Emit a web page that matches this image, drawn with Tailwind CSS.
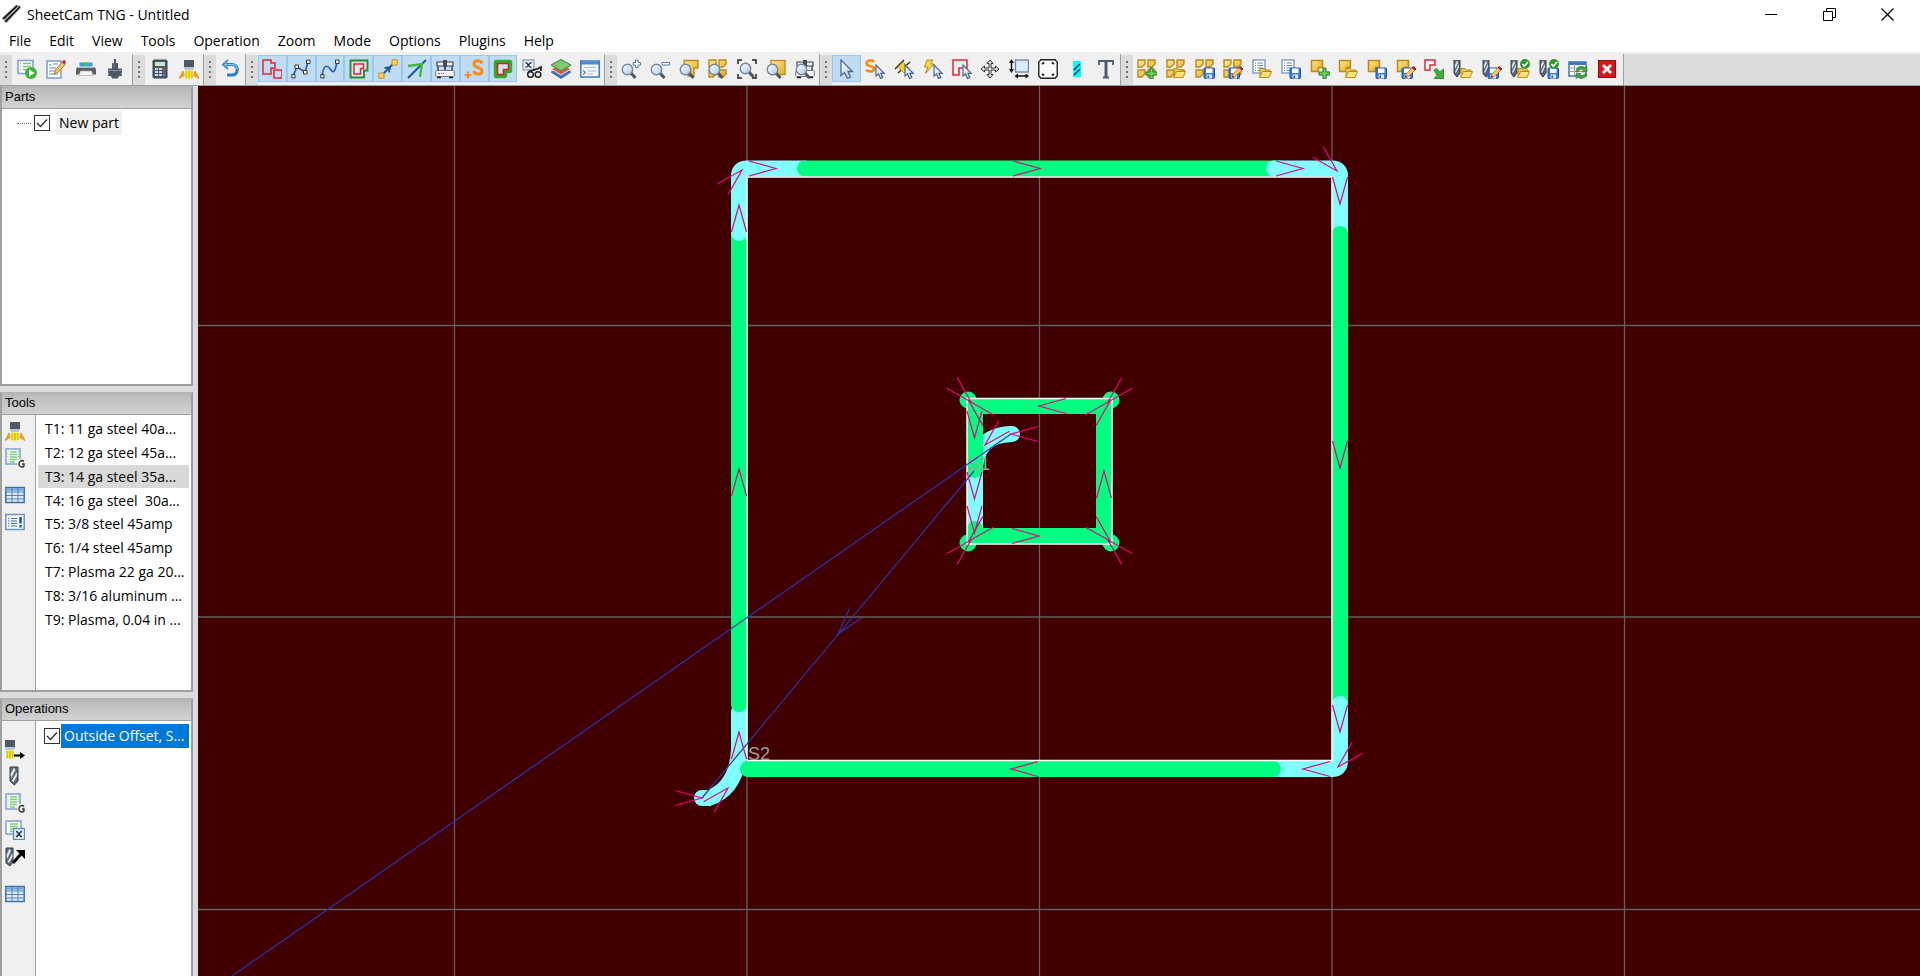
<!DOCTYPE html>
<html lang="en">
  <head>
    <meta charset="UTF-8" />
    <meta name="viewport" content="width=device-width, initial-scale=1.0" />
    <title>SheetCam TNG - Untitled</title>
    <script src="https://cdn.jsdelivr.net/npm/@tailwindcss/browser@4"></script>
  </head>
  <body
    class="h-screen flex flex-col overflow-hidden bg-white text-black text-[14px] font-['Open_Sans','Noto_Sans',sans-serif]"
  >
    <!-- icon parts and icons; not display:none, or the gradients are lost -->
    <svg class="absolute size-0" xmlns="http://www.w3.org/2000/svg">
      <defs>
        <linearGradient id="gold" x1="0" y1="0" x2="1" y2="1">
          <stop offset="0" stop-color="#ffe98a" />
          <stop offset="1" stop-color="#e2ac1f" />
        </linearGradient>
        <linearGradient id="glass" x1="0" y1="0" x2="1" y2="1">
          <stop offset="0" stop-color="#ffffff" />
          <stop offset="1" stop-color="#a9c9ea" />
        </linearGradient>
      </defs>

      <symbol id="part" viewBox="0 0 20 20">
        <path d="M1.500 1.500H12.500V8.500H8.500V12.500H1.500Z" fill="url(#gold)" stroke="#b98a1c" stroke-width="1.500" />
      </symbol>
      <symbol id="nest" viewBox="0 0 20 20">
        <path
          d="M1 1H8V5L5 8H1ZM11 1H18V5L15 8H11ZM1 11H8V15L5 18H1ZM11 11H18V15L15 18H11Z"
          fill="url(#gold)"
          stroke="#b98a1c"
          stroke-width="1.400"
        />
      </symbol>
      <symbol id="folder" viewBox="0 0 20 20">
        <path d="M8 18V9.500H12L13 11H18V13" fill="#f3c84c" stroke="#b98a1c" />
        <path d="M7.500 18.500L10.500 12.500H19.500L17 18.500Z" fill="#ffe277" stroke="#b98a1c" />
      </symbol>
      <symbol id="disk" viewBox="0 0 20 20">
        <rect x="9" y="9" width="10.500" height="10.500" rx="1" fill="#3b7be0" stroke="#1d55b3" />
        <rect x="11" y="9.500" width="6.500" height="4.500" fill="#fff" />
        <rect x="11.500" y="15.500" width="5.500" height="4" fill="#e6f0fb" />
        <rect x="12.500" y="16.500" width="1.500" height="2.500" fill="#1d55b3" />
      </symbol>
      <symbol id="pencil" viewBox="0 0 20 20">
        <path d="M9 18.500L10 15L16 8.500L19 11L12.500 17.500Z" fill="#f4c46c" stroke="#b0752a" stroke-width=".8" />
        <path d="M16 8.500L17.500 7.500L20 10L19 11Z" fill="#c92a2a" stroke="#a01818" />
        <path d="M9 18.500L9.600 16.400L11 17.800Z" fill="#333" />
      </symbol>
      <symbol id="plus" viewBox="0 0 20 20">
        <path d="M13 9H16V13H20V16H16V20H13V16H9V13H13Z" fill="#6fd05a" stroke="#24791f" />
      </symbol>
      <symbol id="drill" viewBox="0 0 20 20">
        <path d="M1 1H7V14L4 18L1 15Z" fill="#5a6877" />
        <path d="M1.500 7L4 1.500L5 4L2 10ZM2 13L6 5V8L3 14Z" fill="#dfe6ec" />
        <path d="M1 1V14L4 18L7 14V1" fill="none" stroke="#323d49" />
      </symbol>
      <symbol id="ok" viewBox="0 0 20 20">
        <circle cx="15" cy="5" r="5" fill="#2f9a2b" />
        <path d="M12.300 5L14.300 7L18 3" fill="none" stroke="#fff" stroke-width="1.600" />
      </symbol>
      <symbol id="page" viewBox="0 0 20 20">
        <rect x="1" y="1" width="12" height="13" fill="#fff" stroke="#7c9cc4" stroke-width="1.400" />
        <path d="M3 4H4M5.500 4H11M3 6.500H4M5.500 6.500H11M3 9H4M5.500 9H11M3 11.500H4M5.500 11.500H11" stroke="#5b84b8" />
      </symbol>
      <symbol id="lens" viewBox="0 0 20 20">
        <path d="M10 14L14.500 19" stroke="#4d565f" stroke-width="3" />
        <circle cx="6.500" cy="10.500" r="5.200" fill="url(#glass)" stroke="#75869b" stroke-width="1.400" />
      </symbol>
      <symbol id="pointer" viewBox="0 0 20 20">
        <path
          d="M11 6V17L13.500 15L15.500 19.500L17.800 18.500L16 14.300H19.300Z"
          fill="url(#glass)"
          stroke="#50698a"
          stroke-width="1.200"
        />
      </symbol>
      <symbol id="torchhead" viewBox="0 0 20 20">
        <path d="M5 1H15V8L13 11H7L5 8Z" fill="#4d5967" />
        <path d="M5 8H15L13 11H7Z" fill="#b9c6d3" />
        <rect x="7" y="11.500" width="6" height="8" fill="#ffee00" />
        <path d="M7 12V19M10 12V19M13 12V19" stroke="#a79500" stroke-width=".8" />
      </symbol>
      <symbol id="gantry" viewBox="0 0 20 20">
        <path d="M2 3H18V7H2Z" fill="#eef0f2" stroke="#3c444c" stroke-width="1.200" />
        <path d="M3 7V11M17 7V11" stroke="#3c444c" stroke-width="1.500" />
        <rect x="8" y="1" width="4" height="7" fill="#444c55" />
        <path d="M10 8V11" stroke="#222" stroke-width="1.500" />
        <rect x=".7" y="11.500" width="18.600" height="6" rx="1" fill="#f4f5f6" stroke="#737b83" />
        <path d="M3 14.500H5M6 14.500H7" stroke="#d33" />
        <path d="M8 14.500H9" stroke="#3a3" />
        <path d="M2 18.500H6M14 18.500H18" stroke="#222" stroke-width="1.500" />
      </symbol>

      <symbol id="i-run" viewBox="0 0 20 20">
        <rect x="1" y="1.500" width="15" height="13" fill="#fff" stroke="#7ea3cc" stroke-width="1.600" />
        <path d="M3 4.500H4M6 4.500H14M3 7.500H4M6 7.500H14M3 10.500H4M6 10.500H14" stroke="#6fc96a" stroke-width="1.500" />
        <circle cx="14" cy="14" r="6" fill="#3fb637" />
        <path d="M12 10.500L17.500 14L12 17.500Z" fill="#fff" />
      </symbol>
      <symbol id="i-edit" viewBox="0 0 20 20">
        <rect x="1" y="2" width="14" height="17" fill="#fff" stroke="#7ea3cc" stroke-width="1.600" />
        <path d="M3 6H6M7 5H12M3 9H10M3 12H9M3 15H12" stroke="#5d8cc2" stroke-width="1.200" />
        <path d="M8 15L9.500 11L16 3L19 5.500L12 13.500Z" fill="#f4c46c" stroke="#b0752a" />
        <path d="M16 3L18 .8L20 2.500L19 5.500Z" fill="#c92a2a" />
      </symbol>
      <symbol id="i-print" viewBox="0 0 20 20">
        <rect x="3.500" y="3.500" width="13" height="4" fill="#37a1dd" />
        <path d="M8 3.500H13V6H8Z" fill="#53c04a" />
        <path d="M1 8H19L20 11V15.500H16V12H4V15.500H0V11Z" fill="#5a5f65" />
        <path d="M1.500 8.500H18.500" stroke="#b9bec3" />
        <path d="M4.500 12H15.500L17 16.500H3Z" fill="#f7f7f7" stroke="#aaa" stroke-width=".7" />
      </symbol>
      <symbol id="i-mill" viewBox="0 0 20 20">
        <path d="M9 0H11V4H13V9.500H17V14.500H16V15.500H17V17H14L13 19.500H7L6 17H3V15.500H4V14.500H3V9.500H7V4H9Z" fill="#4b5866" />
        <path d="M3 11.500H17" stroke="#8494a5" />
        <path d="M9 4V9" stroke="#7d8b99" />
      </symbol>
      <symbol id="i-calc" viewBox="0 0 20 20">
        <rect x="3" y="1" width="14" height="18" rx="1" fill="#4a5866" stroke="#35414d" />
        <rect x="5" y="3" width="10" height="4" fill="#cfe5c6" />
        <path d="M5 10H8M9 10H12M5 13H8M9 13H12M5 16H8M9 16H12" stroke="#c7d6e6" stroke-width="2" />
        <path d="M13 10H15M13 13H15" stroke="#e04040" stroke-width="2" />
        <path d="M13 16H15" stroke="#4d94e8" stroke-width="2" />
      </symbol>
      <symbol id="i-plasma" viewBox="0 0 20 20">
        <use href="#torchhead" />
        <path d="M4 12L5.300 16.500L0 19.500ZM16 12L14.700 16.500L20 19.500Z" fill="#f2a71b" stroke="#d98d10" stroke-width=".8" />
      </symbol>
      <symbol id="i-undo" viewBox="0 0 20 20">
        <path d="M5 5.500H11C18 5.500 18 16 11 16H6" fill="none" stroke="#2a7fd0" stroke-width="3.200" />
        <path d="M4 5.500H11C15 5.500 16 8 16 10" fill="none" stroke="#8cc6f2" stroke-width="1.200" />
        <path d="M7 1L2 5.500L7 10" fill="none" stroke="#3d92de" stroke-width="2" />
      </symbol>
      <symbol id="i-outline" viewBox="0 0 20 20">
        <path d="M1 1H9V4H13V9H9V15H1ZM12 11H20V19H12Z" fill="none" stroke="#e62331" stroke-width="1.500" />
      </symbol>
      <symbol id="i-nodes" viewBox="0 0 20 20">
        <path d="M2 17L6 8L14 13L17 3" fill="none" stroke="#2b5fa8" stroke-width="1.700" />
        <path d="M.8 15.500H4V19H.8ZM4 6H7.500V9.500H4ZM12.500 11.500H16V15H12.500ZM15.500 1H19V4.500H15.500Z" fill="#fff" stroke="#333" />
      </symbol>
      <symbol id="i-curve" viewBox="0 0 20 20">
        <path d="M2 17C4 2 9 8 11 11C14 16 16 9 17 3" fill="none" stroke="#2b5fa8" stroke-width="1.700" />
        <path d="M.8 15.500H4V19H.8ZM15.500 1H19V4.500H15.500Z" fill="#fff" stroke="#333" />
      </symbol>
      <symbol id="i-offset" viewBox="0 0 20 20">
        <path d="M1.500 1.500H18.500V11.500H15V18.500H1.500Z" fill="#d3e6f2" stroke="#2a8a2d" stroke-width="1.900" />
        <path d="M5 5H14.500V9.500H11.500V15H5Z" fill="#e6eef5" stroke="#e62331" stroke-width="1.500" />
      </symbol>
      <symbol id="i-rapid" viewBox="0 0 20 20">
        <path d="M4 16L16 4M6.500 9L12 8L11 13.500" fill="none" stroke="#1f55a5" stroke-width="1.800" />
        <path d="M.8 14H6V19.200H.8ZM14 .8H19.200V6H14Z" fill="#ffd55a" stroke="#c28f1b" />
      </symbol>
      <symbol id="i-direction" viewBox="0 0 20 20">
        <path d="M1 19L19 1" stroke="#1f55a5" stroke-width="2" />
        <path d="M1 7L15 5L13 18" fill="none" stroke="#3fbb2f" stroke-width="2.300" />
      </symbol>
      <symbol id="i-machine" viewBox="0 0 20 20"><use href="#gantry" /></symbol>
      <symbol id="i-start" viewBox="0 0 20 20">
        <path
          d="M18 4.500C16.500 .8 10 .8 10 5C10 9.500 18 7.500 18 12C18 16 11 16 9.500 12"
          fill="none"
          stroke="#fb8c14"
          stroke-width="3"
        />
        <path d="M4 12.500V19.500M.5 16H7.500" stroke="#fb8c14" stroke-width="2.200" />
      </symbol>
      <symbol id="i-path" viewBox="0 0 20 20">
        <path d="M3.500 3.500H16.500V11.500H11.500V16.500H3.500Z" fill="#d3e3f0" stroke="#2fae28" stroke-width="5.500" stroke-linejoin="round" />
        <path d="M4.500 4.500H15.500V10.500H10.500V15.500H4.500Z" fill="#d3e3f0" stroke="#d51f2b" stroke-width="1.600" />
      </symbol>
      <symbol id="i-vars" viewBox="0 0 20 20">
        <rect x="1" y="1" width="11" height="10" fill="#e9f3fd" stroke="#7ea3cc" stroke-width="1.300" />
        <path d="M3.500 3.500C6 3.500 6.500 8.500 9.500 8.500M9.500 3.500C7 3.500 6 8.500 3.500 8.500" fill="none" stroke="#222" stroke-width="1.300" />
        <path d="M6 14C8 10 11 13 19 8V12" fill="none" stroke="#222" stroke-width="1.700" />
        <circle cx="8.500" cy="15.500" r="2.800" fill="#eee" stroke="#222" stroke-width="1.500" />
        <circle cx="16" cy="15.500" r="2.800" fill="#eee" stroke="#222" stroke-width="1.500" />
      </symbol>
      <symbol id="i-layers" viewBox="0 0 20 20">
        <path d="M0 13L10 8L20 13L10 19.500Z" fill="#3b74c4" stroke="#28599e" stroke-width=".7" />
        <path d="M0 10L10 5L20 10L10 16Z" fill="#e25b50" stroke="#fff" stroke-width=".8" />
        <path d="M0 6L10 .5L20 6L10 12Z" fill="#7dc974" stroke="#2c8a2a" />
      </symbol>
      <symbol id="i-console" viewBox="0 0 20 20">
        <rect x=".8" y="2" width="18.400" height="16" fill="#f1f8ff" stroke="#3c78be" stroke-width="1.500" />
        <path d="M1 4H19" stroke="#4c8bd1" stroke-width="3" />
        <path d="M3 11.500L5.500 13.500L3 15.500" fill="none" stroke="#345" />
        <path d="M4 8.500H16M7.500 12H16M7.500 15H13" stroke="#9ebcdb" stroke-width="1.200" />
      </symbol>

      <symbol id="i-zoomin" viewBox="0 0 20 20">
        <use href="#lens" />
        <path d="M14.500 1H17V3.500H19.500V6H17V8.500H14.500V6H12V3.500H14.500Z" fill="#fff" stroke="#4d7dae" />
      </symbol>
      <symbol id="i-zoomout" viewBox="0 0 20 20">
        <use href="#lens" />
        <path d="M12 3.500H19.500V6H12Z" fill="#fff" stroke="#4d7dae" />
      </symbol>
      <symbol id="i-zoompart" viewBox="0 0 20 20">
        <path d="M5 1.500H19V9H15V17H9V9H5Z" fill="url(#gold)" stroke="#b98a1c" stroke-width="1.300" />
        <use href="#lens" />
      </symbol>
      <symbol id="i-zoomnest" viewBox="0 0 20 20">
        <use href="#nest" />
        <use href="#lens" />
      </symbol>
      <symbol id="i-zoomfit" viewBox="0 0 20 20">
        <use href="#lens" x="2" y="-1" />
        <path d="M1 5V1H5M15 1H19V5M1 15V19H5M15 19H19V15" fill="none" stroke="#222" stroke-width="1.500" />
      </symbol>
      <symbol id="i-zoomsheet" viewBox="0 0 20 20">
        <rect x="5" y="1.500" width="14" height="14" fill="url(#gold)" stroke="#b98a1c" stroke-width="1.300" />
        <use href="#lens" />
      </symbol>
      <symbol id="i-zoommachine" viewBox="0 0 20 20">
        <use href="#gantry" />
        <use href="#lens" />
      </symbol>

      <symbol id="i-select" viewBox="0 0 20 20">
        <path
          d="M5 1V16.500L8.500 13.500L11.500 19.500L14.500 18L12 12.500H16.500Z"
          fill="url(#glass)"
          stroke="#50698a"
          stroke-width="1.300"
        />
      </symbol>
      <symbol id="i-selstart" viewBox="0 0 20 20">
        <path
          d="M9 3C7.500 .5 1.500 1 1.500 4.500C1.500 8 9.300 6.500 9.300 9.800C9.300 13 3 13 1 10.500"
          fill="none"
          stroke="#fb8c14"
          stroke-width="2.700"
        />
        <use href="#pointer" />
      </symbol>
      <symbol id="i-seltab" viewBox="0 0 20 20">
        <path d="M1 10L10 1M4 14L16 3" stroke="#333" stroke-width="1.500" />
        <path d="M4 8L9 3L15 9L10 14Z" fill="#f8cf2f" stroke="#c59a13" />
        <use href="#pointer" />
      </symbol>
      <symbol id="i-selrapid" viewBox="0 0 20 20">
        <path d="M4 1H10L7.500 5H11L2.500 14.500L5 8H1.500Z" fill="#ffd84a" stroke="#b98a1c" />
        <use href="#pointer" />
      </symbol>
      <symbol id="i-selcontour" viewBox="0 0 20 20">
        <path d="M1 1H15V9H7V16H1Z" fill="none" stroke="#e62331" stroke-width="1.500" />
        <use href="#pointer" />
      </symbol>
      <symbol id="i-move" viewBox="0 0 20 20">
        <path
          d="M10 1L13 4.500H11V9H15.500V7L19 10L15.500 13V11H11V15.500H13L10 19L7 15.500H9V11H4.500V13L1 10L4.500 7V9H9V4.500H7Z"
          fill="#e7e7e7"
          stroke="#333"
        />
      </symbol>
      <symbol id="i-size" viewBox="0 0 20 20">
        <rect x="6.500" y="1" width="13" height="12" fill="#dcebfb" stroke="#6284ad" stroke-width="1.300" />
        <path d="M2.500 2V12M7 17H18" stroke="#111" stroke-width="1.500" />
        <path d="M2.500 0L5 4H0ZM2.500 14L5 10H0ZM5.500 17L9 14.500V19.500ZM20 17L16.500 14.500V19.500Z" fill="#111" />
      </symbol>
      <symbol id="i-plate" viewBox="0 0 20 20">
        <path
          d="M3 .8H17L19.200 3V17L17 19.200H3L.8 17V3Z"
          fill="#fbfbfb"
          stroke="#222"
          stroke-width="1.400"
        />
        <path d="M4 5L6 3.500M14 3.500L16 5M4 15L6 16.500M14 16.500L16 15" stroke="#222" stroke-width="2" />
      </symbol>
      <symbol id="i-hatch" viewBox="0 0 20 20">
        <rect x="6" y="2" width="8" height="16" fill="#00ffff" />
        <path d="M7 11L13 5M7 16L13 10" stroke="#124" stroke-width="1.300" />
      </symbol>
      <symbol id="i-text" viewBox="0 0 20 20">
        <path d="M3 6V2H17V6M7 18.500H13" fill="none" stroke="#4e5d6d" stroke-width="1.800" />
        <path d="M10 2V18" stroke="#4e5d6d" stroke-width="3" />
      </symbol>

      <symbol id="i-nestnew" viewBox="0 0 20 20"><use href="#nest" /><use href="#plus" /></symbol>
      <symbol id="i-nestopen" viewBox="0 0 20 20"><use href="#nest" /><use href="#folder" /></symbol>
      <symbol id="i-nestsave" viewBox="0 0 20 20"><use href="#nest" /><use href="#disk" /></symbol>
      <symbol id="i-nestsaveas" viewBox="0 0 20 20">
        <use href="#nest" /><use href="#disk" x="-3" /><use href="#pencil" />
      </symbol>
      <symbol id="i-jobopen" viewBox="0 0 20 20"><use href="#page" /><use href="#folder" /></symbol>
      <symbol id="i-jobsave" viewBox="0 0 20 20"><use href="#page" /><use href="#disk" /></symbol>
      <symbol id="i-partnew" viewBox="0 0 20 20"><use href="#part" /><use href="#plus" /></symbol>
      <symbol id="i-partopen" viewBox="0 0 20 20"><use href="#part" /><use href="#folder" /></symbol>
      <symbol id="i-partsave" viewBox="0 0 20 20"><use href="#part" /><use href="#disk" /></symbol>
      <symbol id="i-partsaveas" viewBox="0 0 20 20">
        <use href="#part" /><use href="#disk" x="-3" /><use href="#pencil" />
      </symbol>
      <symbol id="i-import" viewBox="0 0 20 20">
        <path d="M1 1H11V6H6V11H1Z" fill="#fff" stroke="#e62331" stroke-width="1.500" />
        <path d="M10 11L12.500 9.500L16 13L19.500 10V19.500H10L13 16.500Z" fill="#45ad3b" stroke="#24791f" stroke-width=".8" />
      </symbol>
      <symbol id="i-toolopen" viewBox="0 0 20 20"><use href="#drill" /><use href="#folder" /></symbol>
      <symbol id="i-toolsaveas" viewBox="0 0 20 20">
        <use href="#drill" /><use href="#disk" x="-3" /><use href="#pencil" />
      </symbol>
      <symbol id="i-toolsetopen" viewBox="0 0 20 20">
        <use href="#drill" /><use href="#folder" /><use href="#ok" />
      </symbol>
      <symbol id="i-toolsetsave" viewBox="0 0 20 20">
        <use href="#drill" /><use href="#disk" /><use href="#ok" />
      </symbol>
      <symbol id="i-refresh" viewBox="0 0 20 20">
        <rect x="1" y="3" width="17" height="14" fill="#fff" stroke="#3c78be" stroke-width="1.500" />
        <path d="M1 4.500H18" stroke="#3c78be" stroke-width="3" />
        <path d="M2 9H17M2 12.500H17M6.500 5V16" stroke="#7ea3cc" />
        <path d="M8 13C8 7 15 6 17 9L19 7.500V13H14L15.500 11C14 9.500 11 10 10.500 13ZM19 15C18 20 11 20.500 10 18L8 19.500V14.500H13L11.500 16C13 17.500 15.500 17 16.500 15Z" fill="#47a340" stroke="#24791f" stroke-width=".6" />
      </symbol>
      <symbol id="i-delete" viewBox="0 0 20 20">
        <rect x="1.500" y="1.500" width="17" height="17" fill="#d4161d" stroke="#8d0f14" />
        <path d="M6 6L14 14M14 6L6 14" stroke="#fff" stroke-width="2.800" />
      </symbol>

      <symbol id="i-gcode" viewBox="0 0 20 20">
        <rect x="1" y="1" width="14" height="15" fill="#fff" stroke="#7ea3cc" stroke-width="1.500" />
        <path d="M5 4H12M5 6.500H12M5 9H12M5 11.500H12M5 14H10" stroke="#74cf70" stroke-width="1.500" />
        <path d="M3 3V14M13.500 3V9" stroke="#99a" stroke-dasharray="1 1.500" />
        <rect x="12.500" y="11" width="8" height="9" fill="#f0f0f0" />
        <path d="M19 13.500C17 11.500 14 13 14 16C14 19 17.500 20 19 18V16H17" fill="none" stroke="#333" stroke-width="1.400" />
      </symbol>
      <symbol id="i-gvars" viewBox="0 0 20 20">
        <rect x="1" y="1" width="15" height="13" fill="#fff" stroke="#7ea3cc" stroke-width="1.500" />
        <path d="M5 4H13M5 6.500H13M5 9H13M5 11.500H10" stroke="#74cf70" stroke-width="1.500" />
        <rect x="8.500" y="8.500" width="11" height="11" fill="#dcecfb" stroke="#5f8abb" stroke-width="1.300" />
        <path d="M11 11.500C13.500 11 14 17 17 16.500M17 11.500C15 11 13 17 11 16.500" fill="none" stroke="#223" stroke-width="1.400" />
      </symbol>
      <symbol id="i-table" viewBox="0 0 20 20">
        <rect x=".8" y="2.500" width="18.400" height="15" fill="#dcecfb" stroke="#3f6fa8" stroke-width="1.500" />
        <path d="M1 4.500H19" stroke="#78a6d8" stroke-width="2.500" />
        <path d="M1 7H19M1 10.500H19M1 14H19M7 3V17M13 3V17" stroke="#5482b8" />
      </symbol>
      <symbol id="i-notes" viewBox="0 0 20 20">
        <rect x=".8" y="2.500" width="18.400" height="15" fill="#f7fbff" stroke="#6c93c4" stroke-width="1.500" />
        <path d="M3 6.500H4.500M6 6.500H12M3 9H4.500M6 9H12M3 11.500H4.500M6 11.500H12M3 14H4.500M6 14H12" stroke="#3c6db0" />
        <path d="M15.500 5V11.500M15.500 13V15.500" stroke="#1556c8" stroke-width="2.500" />
      </symbol>
      <symbol id="i-jetcut" viewBox="0 0 20 20">
        <use href="#torchhead" x="-5" />
        <path d="M9 16.500H16" stroke="#000" stroke-width="2" />
        <path d="M15 13L20 16.500L15 20Z" fill="#000" />
      </symbol>
      <symbol id="i-drilling" viewBox="0 0 20 20">
        <path d="M5 1H13V15L9.500 19L5 15Z" fill="#5a6877" stroke="#323d49" />
        <path d="M5.500 8L9 1.500L10.500 4L6 12ZM6.500 15L12 6V10L8.500 16Z" fill="#dfe6ec" />
      </symbol>
      <symbol id="i-movetool" viewBox="0 0 20 20">
        <path d="M1 1H8V15L5 19L1 16Z" fill="#5a6877" stroke="#323d49" />
        <path d="M1.500 8L4.500 1.500L6 4L2 12ZM2.500 15L7.500 6V10L4 16Z" fill="#dfe6ec" />
        <path d="M8 16L16 7" stroke="#000" stroke-width="3" />
        <path d="M11 3H20V12Z" fill="#000" />
      </symbol>
    </svg>

    <header class="flex h-7 items-center">
      <svg class="ml-0.5 mr-[5px] size-5" viewBox="0 0 20 20">
        <path d="M0 14L14 1L19 2L5 19L3 17Z" fill="#777" />
        <path d="M1 15L15 2M3 18L18 3" stroke="#111" stroke-width="1.500" />
        <path d="M2 16.500L16 3M5 18.500L19 4" stroke="#ccc" />
      </svg>
      <h1>SheetCam TNG - Untitled</h1>
      <div class="ml-auto mr-1 flex">
        <button aria-label="Minimize" class="flex h-7 w-[58px] items-center justify-center">
          <svg class="size-3" viewBox="0 0 12 12"><path d="M0 6.500H12" stroke="#000" /></svg>
        </button>
        <button aria-label="Restore" class="flex h-7 w-[58px] items-center justify-center">
          <svg class="size-[13px]" viewBox="0 0 13 13">
            <path d="M.5 3.500H9.500V12.500H.5ZM3.500 3.500V.5H12.500V9.500H9.500" fill="none" stroke="#000" />
          </svg>
        </button>
        <button aria-label="Close" class="flex h-7 w-[58px] items-center justify-center">
          <svg class="size-[13px]" viewBox="0 0 13 13">
            <path d="M.5 .5L12.500 12.500M12.500 .5L.5 12.500" stroke="#000" stroke-width="1.200" />
          </svg>
        </button>
      </div>
    </header>

    <nav class="flex h-6 items-center">
      <button class="px-[9px]">File</button>
      <button class="px-[9px]">Edit</button>
      <button class="px-[9px]">View</button>
      <button class="px-[9px]">Tools</button>
      <button class="px-[9px]">Operation</button>
      <button class="px-[9px]">Zoom</button>
      <button class="px-[9px]">Mode</button>
      <button class="px-[9px]">Options</button>
      <button class="px-[9px]">Plugins</button>
      <button class="px-[9px]">Help</button>
    </nav>

    <div
      id="toolbars"
      class="flex h-[34px] shrink-0 border-t-2 border-b border-t-[#f0f0f0] border-b-[#a0a0a0] bg-[#dcdcdc]"
    ></div>

    <main class="flex min-h-0 flex-1">
      <aside class="flex w-[198px] shrink-0 flex-col gap-1.5 bg-[#dcdcdc] pr-[5px]">
        <section class="flex h-[300px] flex-col border-2 border-[#a0a0a0] border-t-[#b4b4b4] bg-white">
          <h2
            class="h-[21px] shrink-0 border-b border-[#a0a0a0] bg-linear-to-b from-[#bababa] to-[#d2d2d2] pl-[3px] font-['Liberation_Sans',sans-serif] text-[13px] leading-[18px]"
          >
            Parts
          </h2>
          <label class="mt-0.5 flex h-6 items-center pl-[15px]">
            <span class="w-3.5 border-t border-dotted border-gray-500"></span>
            <span class="ml-[3px] grid">
              <input type="checkbox" checked class="col-start-1 row-start-1 size-4 appearance-none border border-[#333] bg-white" />
              <svg class="pointer-events-none col-start-1 row-start-1 size-4" viewBox="0 0 16 16">
                <path d="M3 8L6.500 11.500L13 4.500" fill="none" stroke="#333" stroke-width="1.400" />
              </svg>
            </span>
            <span class="ml-1.5 bg-[#f0f0f0] px-[3px] leading-6">New part</span>
          </label>
        </section>

        <section class="flex h-[300px] flex-col border-2 border-[#a0a0a0] border-t-[#b4b4b4] bg-white">
          <h2
            class="h-[21px] shrink-0 border-b border-[#a0a0a0] bg-linear-to-b from-[#bababa] to-[#d2d2d2] pl-[3px] font-['Liberation_Sans',sans-serif] text-[13px] leading-[18px]"
          >
            Tools
          </h2>
          <div class="flex min-h-0 flex-1">
            <div id="toolIcons" class="w-[34px] shrink-0 border-r border-[#a0a0a0] bg-[#f0f0f0] pt-0.5 pl-[3px]"></div>
            <ul id="toolList" class="grid h-[216px] min-w-0 flex-1 grid-rows-9 px-0.5 pt-0.5"></ul>
          </div>
        </section>

        <section class="flex min-h-0 flex-1 flex-col border-2 border-b-0 border-[#a0a0a0] border-t-[#b4b4b4] bg-white">
          <h2
            class="h-[21px] shrink-0 border-b border-[#a0a0a0] bg-linear-to-b from-[#bababa] to-[#d2d2d2] pl-[3px] font-['Liberation_Sans',sans-serif] text-[13px] leading-[18px]"
          >
            Operations
          </h2>
          <div class="flex min-h-0 flex-1">
            <div id="operationIcons" class="w-[34px] shrink-0 border-r border-[#a0a0a0] bg-[#f0f0f0] pt-3.5 pl-[3px]"></div>
            <label class="mt-[3px] flex h-6 min-w-0 flex-1 items-center pr-0.5 pl-2">
              <span class="grid">
                <input type="checkbox" checked class="col-start-1 row-start-1 size-4 appearance-none border border-[#333] bg-white" />
                <svg class="pointer-events-none col-start-1 row-start-1 size-4" viewBox="0 0 16 16">
                  <path d="M3 8L6.500 11.500L13 4.500" fill="none" stroke="#333" stroke-width="1.400" />
                </svg>
              </span>
              <span class="ml-px flex-1 bg-[#0078d7] pl-[3px] leading-6 whitespace-nowrap text-white">Outside Offset, S...</span>
            </label>
          </div>
        </section>
      </aside>

      <!-- work area -->
      <svg class="min-w-0 flex-1 bg-[#400000]" viewBox="198 86 1722 890" preserveAspectRatio="xMinYMin slice">
        <defs>
          <path id="arrow" d="M-27 -7.500L0 0L-27 7.500" />
        </defs>
        <path
          d="M454.500 86V976M747 86V976M1039.500 86V976M1332 86V976M1624.500 86V976M198 325.500H1920M198 617H1920M198 909.500H1920"
          stroke="#606060"
          stroke-width="1.300"
        />

        <g fill="none" stroke-width="16" stroke-linecap="round">
          <path d="M739 240V176Q739 168.500 747 168.500H805" stroke="#80ffff" />
          <path d="M739 233V704M805 168.500H1280" stroke="#00ff80" />
          <path d="M739 233V200M1274 168.500H1332Q1340 168.500 1340 176V240" stroke="#80ffff" />
          <path d="M1340 234V706" stroke="#00ff80" />
          <path d="M1340 704V761Q1340 769 1332 769H1260" stroke="#80ffff" />
          <path d="M739 712V750Q737 788 709 798H702" stroke="#80ffff" />
          <path d="M739 690V704M1273 769H748" stroke="#00ff80" />
        </g>
        <rect x="747" y="177" width="585" height="583.500" fill="none" stroke="#fff" stroke-width="1.500" />

        <path d="M1012 434Q975 435 975 472V530" fill="none" stroke="#80ffff" stroke-width="16" stroke-linecap="round" />
        <path d="M975 470V406H1104V536H975V529" fill="none" stroke="#00ff80" stroke-width="16" stroke-linecap="round" />
        <g fill="#00ff80">
          <circle cx="968" cy="400" r="8.500" />
          <circle cx="1111" cy="400" r="8.500" />
          <circle cx="968" cy="543" r="8.500" />
          <circle cx="1111" cy="543" r="8.500" />
        </g>
        <rect x="967" y="398.500" width="145" height="145.500" fill="none" stroke="#fff" stroke-width="1.500" />

        <g fill="#a0a0a0" font-family="Liberation Sans, sans-serif" font-size="18">
          <text x="748" y="760">S2</text>
          <text x="968" y="470">S1</text>
        </g>

        <g fill="none" stroke="#3030b0" stroke-width="1.200">
          <path d="M1011 434L232 976M974 471L702 798" />
          <use href="#arrow" transform="translate(838 634) rotate(129.700)" />
        </g>

        <g fill="none" stroke="#e6007e" stroke-width="1.200">
          <use href="#arrow" transform="translate(776 168.500)" />
          <use href="#arrow" transform="translate(1040 168.500)" />
          <use href="#arrow" transform="translate(1303 168.500)" />
          <use href="#arrow" transform="translate(739 205) rotate(-90)" />
          <use href="#arrow" transform="translate(739 469) rotate(-90)" />
          <use href="#arrow" transform="translate(739 732) rotate(-90)" />
          <use href="#arrow" transform="translate(1340 204) rotate(90)" />
          <use href="#arrow" transform="translate(1340 468) rotate(90)" />
          <use href="#arrow" transform="translate(1340 732) rotate(90)" />
          <use href="#arrow" transform="translate(1303 769) rotate(180)" />
          <use href="#arrow" transform="translate(1011 769) rotate(180)" />
          <use href="#arrow" transform="translate(742 170) rotate(-45)" />
          <use href="#arrow" transform="translate(1337 171) rotate(45)" />
          <use href="#arrow" transform="translate(1338 767) rotate(135)" />
          <use href="#arrow" transform="translate(702 798)" />
          <use href="#arrow" transform="translate(728 788) rotate(-45)" />

          <use href="#arrow" transform="translate(1039 406) rotate(180)" />
          <use href="#arrow" transform="translate(1039 536)" />
          <use href="#arrow" transform="translate(1104 471) rotate(-90)" />
          <use href="#arrow" transform="translate(974.500 438) rotate(90)" />
          <use href="#arrow" transform="translate(974.500 499) rotate(90)" />
          <use href="#arrow" transform="translate(974.500 533) rotate(90)" />
          <use href="#arrow" transform="translate(971 402) rotate(45)" />
          <use href="#arrow" transform="translate(969 401) rotate(-135)" />
          <use href="#arrow" transform="translate(1108 402) rotate(135)" />
          <use href="#arrow" transform="translate(1110 401) rotate(-45)" />
          <use href="#arrow" transform="translate(971 540) rotate(-45)" />
          <use href="#arrow" transform="translate(969 541) rotate(135)" />
          <use href="#arrow" transform="translate(1108 540) rotate(-135)" />
          <use href="#arrow" transform="translate(1110 541) rotate(45)" />
          <use href="#arrow" transform="translate(1011 434) rotate(180)" />
          <use href="#arrow" transform="translate(985 445) rotate(135)" />
        </g>
      </svg>
    </main>

    <script>
      const toolbars = [
        { width: "w-[133px] pr-0.5", icons: ["run", "edit", "print", "mill"] },
        { width: "w-[71px]", icons: ["calc", "plasma"] },
        { width: "w-[42px]", icons: ["undo"] },
        {
          width: "w-[359px]",
          icons: [
            "outline*", "nodes*", "curve*", "offset*", "rapid*", "direction*",
            "machine*", "start*", "path*", "vars", "layers", "console",
          ],
        },
        {
          width: "w-[215px]",
          icons: ["zoomin", "zoomout", "zoompart", "zoomnest", "zoomfit", "zoomsheet", "zoommachine"],
        },
        {
          width: "w-[301px]",
          icons: [
            "select*", "selstart", "seltab", "selrapid", "selcontour",
            "move", "size", "plate", "hatch", "text",
          ],
        },
        {
          width: "w-[503px] pr-0.5",
          icons: [
            "nestnew", "nestopen", "nestsave", "nestsaveas", "jobopen", "jobsave",
            "partnew", "partopen", "partsave", "partsaveas", "import", "toolopen",
            "toolsaveas", "toolsetopen", "toolsetsave", "refresh", "delete",
          ],
        },
      ];

      function icon(name) {
        return `<svg class="size-5 shrink-0"><use href="#i-${name}"></use></svg>`;
      }

      document.getElementById("toolbars").innerHTML = toolbars
        .map((bar) => {
          const buttons = bar.icons
            .map((item) => {
              const name = item.replace("*", "");
              const active = item.endsWith("*")
                ? "border-[#90c8f6] bg-[#c0dcf3]"
                : "border-transparent";
              return `<button aria-label="${name}" class="flex h-[27px] flex-1 items-center justify-center border ${active}">${icon(name)}</button>`;
            })
            .join("");
          return `
            <div class="${bar.width} flex shrink-0 border-r border-[#a0a0a0] bg-[#f0f0f0]">
              <div class="mt-px flex w-3 shrink-0 flex-col items-center gap-[3px] bg-[#dcdcdc] pt-1.5">
                <i class="size-0.5 bg-gray-500"></i><i class="size-0.5 bg-gray-500"></i>
                <i class="size-0.5 bg-gray-500"></i><i class="size-0.5 bg-gray-500"></i>
              </div>
              <div class="flex flex-1 pt-px">${buttons}</div>
            </div>`;
        })
        .join("");

      // an empty name leaves a gap in the column
      function iconColumn(names) {
        return names
          .map((name) =>
            name
              ? `<button aria-label="${name}" class="flex h-[27px] items-center">${icon(name)}</button>`
              : `<div class="h-2.5"></div>`
          )
          .join("");
      }
      document.getElementById("toolIcons").innerHTML = iconColumn(["plasma", "gcode", "", "table", "notes"]);
      document.getElementById("operationIcons").innerHTML = iconColumn([
        "jetcut", "drilling", "gcode", "gvars", "movetool", "", "table",
      ]);

      const tools = [
        "T1: 11 ga steel 40a...",
        "T2: 12 ga steel 45a...",
        "T3: 14 ga steel 35a...",
        "T4: 16 ga steel  30a...",
        "T5: 3/8 steel 45amp",
        "T6: 1/4 steel 45amp",
        "T7: Plasma 22 ga 20...",
        "T8: 3/16 aluminum ...",
        "T9: Plasma, 0.04 in ...",
      ];
      document.getElementById("toolList").innerHTML = tools
        .map((tool, index) => {
          const selected = index === 2 ? "bg-[#d9d9d9]" : "";
          return `<li class="flex items-center pl-[7px] whitespace-pre ${selected}">${tool}</li>`;
        })
        .join("");
    </script>
  </body>
</html>
